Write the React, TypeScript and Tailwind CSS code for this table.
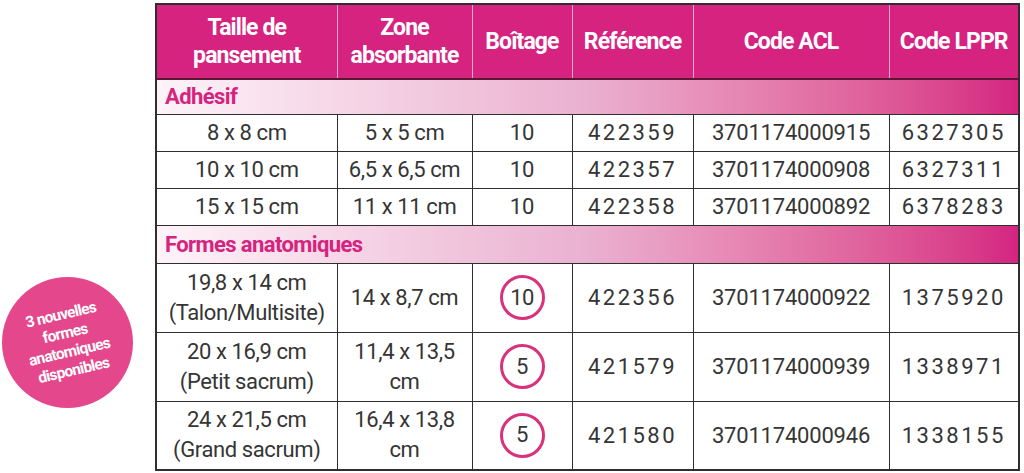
const HEAD = ['Taille de pansement', 'Zone absorbante', 'Boîtage', 'Référence', 'Code ACL', 'Code LPPR']

const HEAD_LINES: string[][] = [
  ['Taille de', 'pansement'],
  ['Zone', 'absorbante'],
  ['Boîtage'],
  ['Référence'],
  ['Code ACL'],
  ['Code LPPR'],
]

interface Row {
  size: string[];
  zone: string[];
  box: string;
  circled?: boolean;
  ref: string;
  acl: string;
  lppr: string;
}

const ADHESIF: Row[] = [
  { size: ['8 x 8 cm'], zone: ['5 x 5 cm'], box: '10', ref: '422359', acl: '3701174000915', lppr: '6327305' },
  { size: ['10 x 10 cm'], zone: ['6,5 x 6,5 cm'], box: '10', ref: '422357', acl: '3701174000908', lppr: '6327311' },
  { size: ['15 x 15 cm'], zone: ['11 x 11 cm'], box: '10', ref: '422358', acl: '3701174000892', lppr: '6378283' },
]

const FORMES: Row[] = [
  { size: ['19,8 x 14 cm', '(Talon/Multisite)'], zone: ['14 x 8,7 cm'], box: '10', circled: true, ref: '422356', acl: '3701174000922', lppr: '1375920' },
  { size: ['20 x 16,9 cm', '(Petit sacrum)'], zone: ['11,4 x 13,5', 'cm'], box: '5', circled: true, ref: '421579', acl: '3701174000939', lppr: '1338971' },
  { size: ['24 x 21,5 cm', '(Grand sacrum)'], zone: ['16,4 x 13,8', 'cm'], box: '5', circled: true, ref: '421580', acl: '3701174000946', lppr: '1338155' },
]

const cell = 'border border-[#2f2f2f] text-center align-middle p-0'

function Lines({ lines }: { lines: string[] }) {
  return (
    <>
      {lines.map((l) => (
        <div key={l} className="leading-[30px]">{l}</div>
      ))}
    </>
  )
}

function DataRow({ row, tall }: { row: Row; tall?: boolean }) {
  return (
    <tr className={tall ? 'h-[69px]' : 'h-[37px]'}>
      <td className={`${cell} tracking-[-0.4px]`}><Lines lines={row.size} /></td>
      <td className={`${cell} tracking-[-0.4px]`}><Lines lines={row.zone} /></td>
      <td className={cell}>
        {row.circled ? (
          <div className="mx-auto w-[45px] h-[45px] rounded-full border-[3px] border-[#d8327c] flex items-center justify-center leading-none tracking-[-0.5px]">
            {row.box}
          </div>
        ) : (
          row.box
        )}
      </td>
      <td className={`${cell} tracking-[2.5px]`}>{row.ref}</td>
      <td className={`${cell} tracking-[-0.2px]`}>{row.acl}</td>
      <td className={`${cell} tracking-[2.5px]`}>{row.lppr}</td>
    </tr>
  )
}

function SectionRow({ label, tall }: { label: string; tall?: boolean }) {
  return (
    <tr className={tall ? 'h-[38px]' : 'h-[35px]'}>
      <td
        colSpan={6}
        className="border border-[#2f2f2f] bg-gradient-to-r from-[#fdf3f8] via-[#eab0d0] to-[#d42380] px-2 text-left align-middle font-bold text-[#d6237f] text-[22px] tracking-[-0.6px]"
      >
        {label}
      </td>
    </tr>
  )
}

export default function App() {
  return (
    <div className="w-[1024px] h-[473px] bg-white flex font-['Roboto',_'Liberation_Sans',_sans-serif] overflow-hidden">
      {/* Badge column */}
      <div className="w-[155px] shrink-0 flex flex-col justify-end pb-[65px] pl-[2px]">
        <div className="w-[131px] h-[131px] rounded-full bg-[#e4478c] flex items-center justify-center">
          <p className="-rotate-[13deg] text-white font-bold text-[15.5px] leading-[19px] text-center tracking-[-0.7px]">
            3 nouvelles<br />formes<br />anatomiques<br />disponibles
          </p>
        </div>
      </div>

      {/* Table */}
      <div className="pt-[3px]">
        <table className="table-fixed border-collapse w-[863px] border-2 border-[#2f2f2f] text-[22px] font-normal text-[#353535]">
          <colgroup>
            <col className="w-[181px]" />
            <col className="w-[135px]" />
            <col className="w-[100px]" />
            <col className="w-[121px]" />
            <col className="w-[196px]" />
            <col className="w-[130px]" />
          </colgroup>
          <thead>
            <tr className="h-[75px] bg-[#d5237f]">
              {HEAD_LINES.map((lines, i) => (
                <th
                  key={HEAD[i]}
                  className="border-x border-x-[#f0a9cc] border-b-2 border-b-[#5b1636] text-white font-bold text-[23px] tracking-[-0.9px] align-middle first:border-l-[#2f2f2f] last:border-r-[#2f2f2f]"
                >
                  {lines.map((l) => (
                    <div key={l} className="leading-[28px]">{l}</div>
                  ))}
                </th>
              ))}
            </tr>
          </thead>
          <tbody>
            <SectionRow label="Adhésif" />
            {ADHESIF.map((r) => (
              <DataRow key={r.ref} row={r} />
            ))}
            <SectionRow label="Formes anatomiques" tall />
            {FORMES.map((r) => (
              <DataRow key={r.ref} row={r} tall />
            ))}
          </tbody>
        </table>
      </div>
    </div>
  )
}
